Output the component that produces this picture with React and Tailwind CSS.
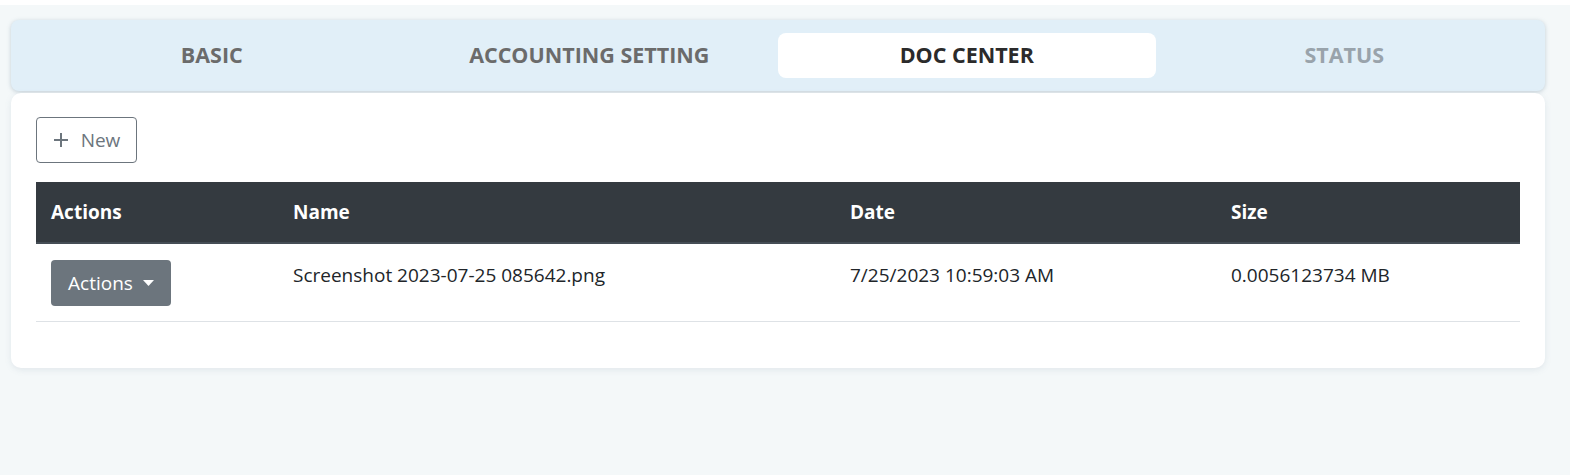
import React from "react";

const tabs = [
  { label: "BASIC", tone: "text-[#6b6b6b]" },
  { label: "ACCOUNTING SETTING", tone: "text-[#6b6b6b]" },
  { label: "DOC CENTER", tone: "text-[#2b2b2b]", active: true },
  { label: "STATUS", tone: "text-[#99a3ab]" },
];

const cols = "grid grid-cols-[242px_557px_381px_1fr]";

const App = () => {
  return (
    <div className="w-full min-h-[475px] bg-white font-['Open_Sans',sans-serif]">
      <div className="h-[5px] bg-white" />
      <div className="bg-[#f4f8f9] pl-[11px] pr-[25px] pt-[15px] pb-[109px] min-h-[470px]">
        <div className="rounded-lg bg-[#e1eff8] shadow-[0_1px_4px_rgba(100,130,150,0.35)] px-3 py-[13px] grid grid-cols-4">
          {tabs.map((t) => (
            <div
              key={t.label}
              className={`h-[45px] flex items-center justify-center rounded-lg text-[21.5px] font-bold ${t.tone} ${
                t.active ? "bg-white" : ""
              }`}
            >
              {t.label}
            </div>
          ))}
        </div>

        <div className="mt-[2px] rounded-[10px] bg-white shadow-[0_2px_6px_rgba(120,140,160,0.15)] px-[25px] pt-6 pb-[46px]">
          <button className="h-[46px] w-[101px] flex items-center justify-center gap-3 border border-[#6c757d] rounded text-[#6c757d] text-[19px]">
            <svg width="16" height="16" viewBox="0 0 16 16" fill="none" stroke="#6c757d" strokeWidth="2">
              <path d="M8 1v14M1 8h14" />
            </svg>
            <span>New</span>
          </button>

          <div className="mt-[19px]">
            <div className={`${cols} h-[62px] bg-[#343a40] border-b-2 border-[#454d55] text-white font-bold text-[19px] items-center`}>
              <div className="px-[15px]">Actions</div>
              <div className="px-[15px]">Name</div>
              <div className="px-[15px]">Date</div>
              <div className="px-[15px]">Size</div>
            </div>
            <div className={`${cols} h-[78px] border-b border-[#dee2e6] text-[#212529] text-[19px]`}>
              <div className="px-[15px] pt-4">
                <button className="h-[46px] w-[120px] rounded bg-[#6c757d] text-white text-[19px] flex items-center justify-center gap-[10px]">
                  <span>Actions</span>
                  <svg width="11" height="6" viewBox="0 0 11 6">
                    <path d="M0 0h11L5.5 6z" fill="white" />
                  </svg>
                </button>
              </div>
              <div className="px-[15px] pt-[17px]">Screenshot 2023-07-25 085642.png</div>
              <div className="px-[15px] pt-[17px]">7/25/2023 10:59:03 AM</div>
              <div className="px-[15px] pt-[17px]">0.0056123734 MB</div>
            </div>
          </div>
        </div>
      </div>
    </div>
  );
};

export default App;
